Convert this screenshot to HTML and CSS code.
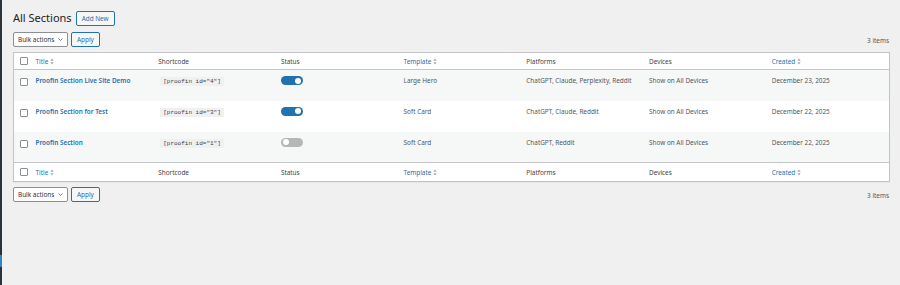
FILE: index.html
```html
<!DOCTYPE html>
<html>

<head>
    <meta charset="utf-8">
    <link rel="stylesheet" href="styles.css">
</head>

<body>
    <div class="admin-menu">
        <div class="menu-mark"></div>
    </div>

    <div class="wrap">
        <div class="page-head">
            <h1 class="page-title">All Sections</h1>
            <a class="btn btn-add">Add New</a>
        </div>

        <!-- TOP NAV -->
        <div class="tablenav">
            <div class="actions">
                <div class="select">Bulk actions
                    <svg class="chev" viewBox="0 0 10 6"><path d="M1 1l4 4 4-4" /></svg>
                </div>
                <a class="btn">Apply</a>
            </div>
            <span class="count">3 items</span>
        </div>

        <table class="list">
            <colgroup>
                <col class="col-cb">
                <col><col><col><col><col><col><col>
            </colgroup>
            <thead>
                <tr>
                    <th class="cb"><span class="check"></span></th>
                    <th><a class="sort">Title <svg class="arrows" viewBox="0 0 6 10"><path d="M3 0.5L5.5 4H0.5z M3 9.5L5.5 6H0.5z" /></svg></a></th>
                    <th>Shortcode</th>
                    <th>Status</th>
                    <th><a class="sort">Template <svg class="arrows" viewBox="0 0 6 10"><path d="M3 0.5L5.5 4H0.5z M3 9.5L5.5 6H0.5z" /></svg></a></th>
                    <th>Platforms</th>
                    <th>Devices</th>
                    <th><a class="sort">Created <svg class="arrows" viewBox="0 0 6 10"><path d="M3 0.5L5.5 4H0.5z M3 9.5L5.5 6H0.5z" /></svg></a></th>
                </tr>
            </thead>
            <tbody>
                <tr class="alt">
                    <td class="cb"><span class="check"></span></td>
                    <td><a class="row-title">Proofin Section Live Site Demo</a></td>
                    <td><code>[proofin id="4"]</code></td>
                    <td><span class="toggle on"></span></td>
                    <td>Large Hero</td>
                    <td>ChatGPT, Claude, Perplexity, Reddit</td>
                    <td>Show on All Devices</td>
                    <td>December 23, 2025</td>
                </tr>
                <tr>
                    <td class="cb"><span class="check"></span></td>
                    <td><a class="row-title">Proofin Section for Test</a></td>
                    <td><code>[proofin id="3"]</code></td>
                    <td><span class="toggle on"></span></td>
                    <td>Soft Card</td>
                    <td>ChatGPT, Claude, Reddit</td>
                    <td>Show on All Devices</td>
                    <td>December 22, 2025</td>
                </tr>
                <tr class="alt">
                    <td class="cb"><span class="check"></span></td>
                    <td><a class="row-title">Proofin Section</a></td>
                    <td><code>[proofin id="1"]</code></td>
                    <td><span class="toggle"></span></td>
                    <td>Soft Card</td>
                    <td>ChatGPT, Reddit</td>
                    <td>Show on All Devices</td>
                    <td>December 22, 2025</td>
                </tr>
            </tbody>
            <tfoot>
                <tr>
                    <th class="cb"><span class="check"></span></th>
                    <th><a class="sort">Title <svg class="arrows" viewBox="0 0 6 10"><path d="M3 0.5L5.5 4H0.5z M3 9.5L5.5 6H0.5z" /></svg></a></th>
                    <th>Shortcode</th>
                    <th>Status</th>
                    <th><a class="sort">Template <svg class="arrows" viewBox="0 0 6 10"><path d="M3 0.5L5.5 4H0.5z M3 9.5L5.5 6H0.5z" /></svg></a></th>
                    <th>Platforms</th>
                    <th>Devices</th>
                    <th><a class="sort">Created <svg class="arrows" viewBox="0 0 6 10"><path d="M3 0.5L5.5 4H0.5z M3 9.5L5.5 6H0.5z" /></svg></a></th>
                </tr>
            </tfoot>
        </table>

        <!-- BOTTOM NAV -->
        <div class="tablenav bottom">
            <div class="actions">
                <div class="select">Bulk actions
                    <svg class="chev" viewBox="0 0 10 6"><path d="M1 1l4 4 4-4" /></svg>
                </div>
                <a class="btn">Apply</a>
            </div>
            <span class="count">3 items</span>
        </div>
    </div>
</body>

</html>
```

FILE: styles.css
```css
body {
    margin: 0;
    height: 285px;
    display: flex;
    background-color: #f0f0f1;
    font-family: "Noto Sans", "Open Sans", sans-serif;
    font-size: 6.4px;
    color: #3c434a;
}

.admin-menu {
    width: 2px;
    background-color: #2c3338;
}

.menu-mark {
    margin-top: 255px;
    height: 12px;
    background-color: #3582c4;
}

.wrap {
    flex: 1;
    padding: 10px 10px 0 11px;
}

/* HEADING */
.page-head {
    display: flex;
    align-items: center;
    gap: 4px;
}

.page-title {
    margin: 0;
    font-size: 11px;
    font-weight: 400;
    color: #1d2327;
    line-height: 16px;
}

.btn {
    display: inline-block;
    box-sizing: border-box;
    height: 15px;
    line-height: 13px;
    padding: 0 5px;
    border: 1px solid #2271b1;
    border-radius: 2px;
    background-color: #f6f7f7;
    color: #2271b1;
    font-size: 6.4px;
}

.btn-add {
    margin-top: 1px;
}

/* TABLENAV */
.tablenav {
    display: flex;
    justify-content: space-between;
    align-items: center;
    height: 15px;
    margin: 6px 0 5px;
}

.tablenav.bottom {
    margin-top: 5px;
}

.actions {
    display: flex;
    gap: 3px;
}

.select {
    box-sizing: border-box;
    height: 15px;
    width: 55px;
    padding: 0 4px;
    display: flex;
    align-items: center;
    justify-content: space-between;
    border: 1px solid #8c8f94;
    border-radius: 2px;
    background-color: #fff;
    color: #2c3338;
}

.chev {
    width: 5px;
    height: 3px;
    fill: none;
    stroke: #50575e;
    stroke-width: 1.6;
}

.count {
    margin-top: 2px;
    margin-right: 1px;
    color: #50575e;
}

/* TABLE */
.list {
    width: 100%;
    table-layout: fixed;
    border-collapse: collapse;
    background-color: #fff;
    border: 1px solid #c3c4c7;
    box-shadow: 0 1px 1px rgba(0, 0, 0, 0.04);
}

.col-cb {
    width: 17px;
}

.list th {
    text-align: left;
    font-weight: 400;
    color: #3c434a;
    height: 17px;
    padding: 0 5px;
    box-sizing: border-box;
    vertical-align: middle;
}

.list thead th {
    border-bottom: 1px solid #c3c4c7;
}

.list tfoot th {
    border-top: 1px solid #c3c4c7;
    height: 19px;
}

.list td {
    height: 31px;
    box-sizing: border-box;
    padding: 6px 5px 0;
    vertical-align: top;
    line-height: 10px;
    color: #50575e;
    white-space: nowrap;
}

.list tr.alt td {
    background-color: #f6f7f7;
}

.list .cb {
    padding: 0 0 0 6px;
}

.list td.cb {
    padding-top: 8px;
}

.check {
    display: block;
    width: 8px;
    height: 8px;
    box-sizing: border-box;
    border: 1px solid #8c8f94;
    border-radius: 1px;
    background-color: #fff;
}

.sort {
    color: #2271b1;
    display: inline-flex;
    align-items: center;
    gap: 2px;
}

.arrows {
    width: 4px;
    height: 7px;
    fill: #a7aaad;
}

.row-title {
    font-weight: 600;
    color: #2271b1;
}

code {
    display: inline-block;
    font-family: "Liberation Mono", monospace;
    font-size: 6px;
    line-height: 9px;
    padding: 0 3px;
    margin-left: 2px;
    background-color: #f0f0f1;
    color: #3c434a;
}

.toggle {
    display: inline-block;
    position: relative;
    width: 22px;
    height: 9px;
    border-radius: 5px;
    margin-top: 0;
    background-color: #b4b6b8;
}

.toggle.on {
    background-color: #2271b1;
}

.toggle::after {
    content: "";
    position: absolute;
    top: 1.5px;
    left: 2px;
    width: 6px;
    height: 6px;
    border-radius: 50%;
    background-color: #fff;
}

.toggle.on::after {
    left: auto;
    right: 2px;
}
```
